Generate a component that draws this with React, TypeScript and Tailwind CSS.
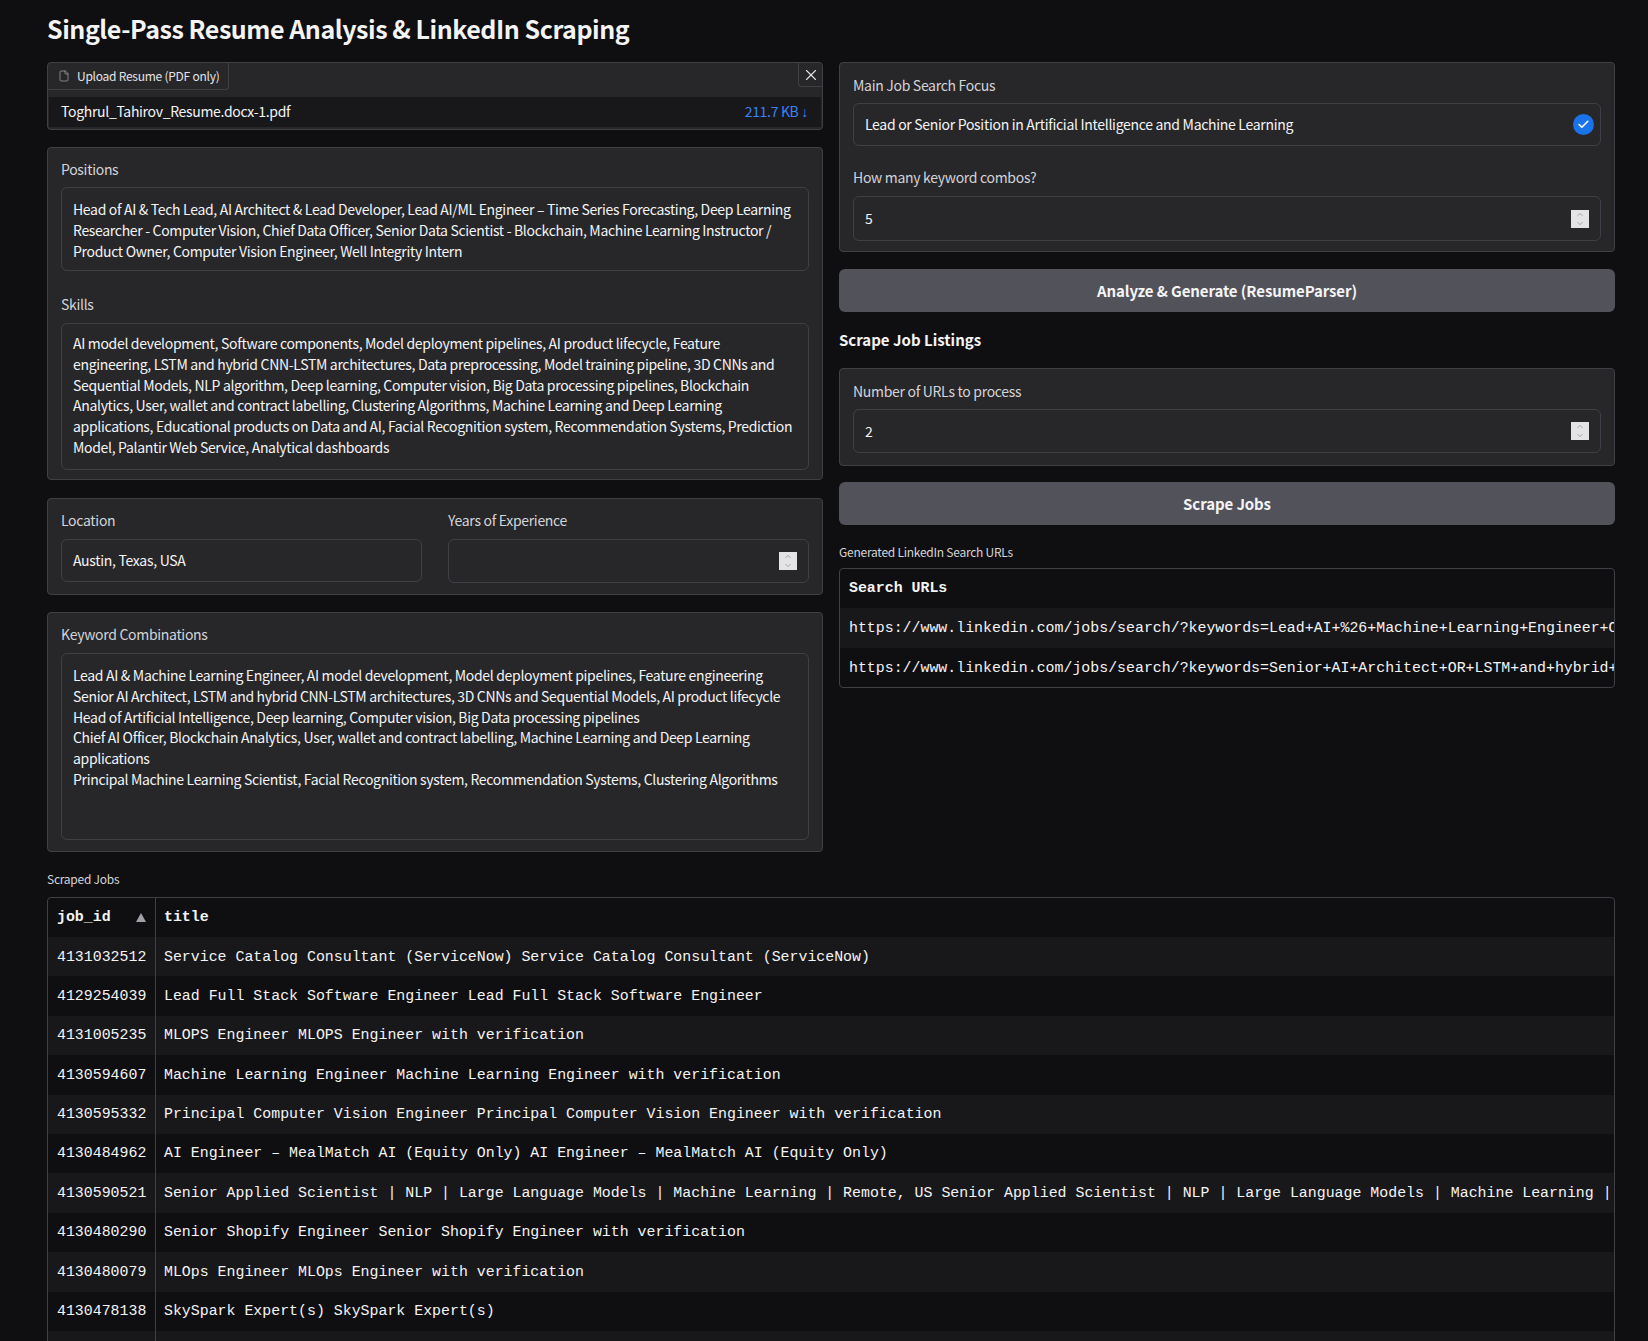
import { File, X, Check, ChevronUp, ChevronDown } from 'lucide-react';

const sans = 'font-["Noto_Sans_CJK_SC","Noto_Sans",sans-serif]';

const jobs = [
  ['4131032512', 'Service Catalog Consultant (ServiceNow) Service Catalog Consultant (ServiceNow)'],
  ['4129254039', 'Lead Full Stack Software Engineer Lead Full Stack Software Engineer'],
  ['4131005235', 'MLOPS Engineer MLOPS Engineer with verification'],
  ['4130594607', 'Machine Learning Engineer Machine Learning Engineer with verification'],
  ['4130595332', 'Principal Computer Vision Engineer Principal Computer Vision Engineer with verification'],
  ['4130484962', 'AI Engineer – MealMatch AI (Equity Only) AI Engineer – MealMatch AI (Equity Only)'],
  ['4130590521', 'Senior Applied Scientist | NLP | Large Language Models | Machine Learning | Remote, US Senior Applied Scientist | NLP | Large Language Models | Machine Learning |'],
  ['4130480290', 'Senior Shopify Engineer Senior Shopify Engineer with verification'],
  ['4130480079', 'MLOps Engineer MLOps Engineer with verification'],
  ['4130478138', 'SkySpark Expert(s) SkySpark Expert(s)'],
  ['', ''],
];

const urls = [
  'https://www.linkedin.com/jobs/search/?keywords=Lead+AI+%26+Machine+Learning+Engineer+OR',
  'https://www.linkedin.com/jobs/search/?keywords=Senior+AI+Architect+OR+LSTM+and+hybrid+CNN',
];

function Panel({ className = '', children }: { className?: string; children: React.ReactNode }) {
  return <div className={`bg-[#27272a] border border-[#3f3f46] rounded-[4px] ${className}`}>{children}</div>;
}

function Label({ children }: { children: React.ReactNode }) {
  return <div className="text-[14px] tracking-[-0.3px] leading-[20px] text-[#d4d4d8]">{children}</div>;
}

function TextBox({ className = '', lines }: { className?: string; lines: string[] }) {
  return (
    <div className={`mt-[8px] border border-[#3f3f46] rounded-[6px] px-[11px] py-[11px] text-[14px] tracking-[-0.32px] leading-[20.8px] whitespace-nowrap text-[#f4f4f5] ${className}`}>
      {lines.map((l) => (
        <div key={l}>{l}</div>
      ))}
    </div>
  );
}

function NumberBox({ value, className = '' }: { value: string; className?: string }) {
  return (
    <div className={`mt-[8px] flex items-center justify-between border border-[#3f3f46] rounded-[6px] pl-[11px] pr-[11px] text-[14px] text-[#f4f4f5] ${className}`}>
      <span>{value}</span>
      <span className="flex flex-col items-center justify-center w-[18px] h-[18px] bg-[#e4e4e7] text-[#71717a]">
        <ChevronUp className="w-[12px] h-[9px]" strokeWidth={1.5} />
        <ChevronDown className="w-[12px] h-[9px]" strokeWidth={1.5} />
      </span>
    </div>
  );
}

function WideButton({ children }: { children: React.ReactNode }) {
  return (
    <button className="w-full h-[43px] pt-[1px] bg-[#52525b] rounded-[6px] text-[15px] tracking-[-0.1px] font-semibold text-[#f4f4f5] text-center">
      {children}
    </button>
  );
}

export default function App() {
  return (
    <div className={`h-[1341px] overflow-hidden bg-[#0f0f11] pl-[47px] pr-[33px] ${sans}`}>
      <h1 className="h-[62px] pt-[10px] text-[25px] tracking-[-0.45px] leading-[36px] font-semibold text-[#f4f4f5]">
        Single-Pass Resume Analysis &amp; LinkedIn Scraping
      </h1>

      <div className="grid grid-cols-2 gap-x-[16px] h-[806px]">
        <div className="flex flex-col">
          <Panel className="relative h-[68px]">
            <div className="flex items-center gap-[7px] w-[181px] h-[27px] pl-[10px] border-r border-b border-[#3f3f46] rounded-br-[4px] text-[12px] tracking-[-0.25px] whitespace-nowrap text-[#e4e4e7]">
              <File className="w-[12px] h-[12px] text-[#a1a1aa]" strokeWidth={1.5} />
              Upload Resume (PDF only)
            </div>
            <div className="absolute top-0 right-0 flex items-center justify-center w-[24px] h-[24px] border-l border-b border-[#3f3f46] rounded-bl-[4px] text-[#e4e4e7]">
              <X className="w-[18px] h-[18px]" strokeWidth={1.5} />
            </div>
            <div className="flex items-center justify-between h-[30px] mx-[1px] mt-[7px] pb-[1px] pl-[12px] pr-[13px] bg-[#18181b] text-[14px] tracking-[-0.32px] text-[#f4f4f5]">
              <span>Toghrul_Tahirov_Resume.docx-1.pdf</span>
              <span className="text-[#3b82f6]">
                211.7 KB <span className="font-['Liberation_Sans',sans-serif] text-[14px]">↓</span>
              </span>
            </div>
          </Panel>

          <Panel className="mt-[17px] h-[333px] px-[13px] pt-[11px]">
            <Label>Positions</Label>
            <TextBox
              className="h-[84px]"
              lines={[
                'Head of AI & Tech Lead, AI Architect & Lead Developer, Lead AI/ML Engineer – Time Series Forecasting, Deep Learning',
                'Researcher - Computer Vision, Chief Data Officer, Senior Data Scientist - Blockchain, Machine Learning Instructor /',
                'Product Owner, Computer Vision Engineer, Well Integrity Intern',
              ]}
            />
            <div className="h-[23px]" />
            <Label>Skills</Label>
            <TextBox
              className="!mt-[9px] !pt-[9px] h-[147px]"
              lines={[
                'AI model development, Software components, Model deployment pipelines, AI product lifecycle, Feature',
                'engineering, LSTM and hybrid CNN-LSTM architectures, Data preprocessing, Model training pipeline, 3D CNNs and',
                'Sequential Models, NLP algorithm, Deep learning, Computer vision, Big Data processing pipelines, Blockchain',
                'Analytics, User, wallet and contract labelling, Clustering Algorithms, Machine Learning and Deep Learning',
                'applications, Educational products on Data and AI, Facial Recognition system, Recommendation Systems, Prediction',
                'Model, Palantir Web Service, Analytical dashboards',
              ]}
            />
          </Panel>

          <Panel className="mt-[18px] h-[97px] px-[13px] pt-[11px] grid grid-cols-2 gap-x-[26px]">
            <div>
              <Label>Location</Label>
              <div className="mt-[9px] flex items-center h-[43px] border border-[#3f3f46] rounded-[6px] px-[11px] text-[14px] tracking-[-0.3px] text-[#f4f4f5]">
                Austin, Texas, USA
              </div>
            </div>
            <div>
              <Label>Years of Experience</Label>
              <NumberBox value="" className="!mt-[9px] h-[44px]" />
            </div>
          </Panel>

          <Panel className="mt-[17px] h-[240px] px-[13px] pt-[11px]">
            <Label>Keyword Combinations</Label>
            <TextBox
              className="!mt-[9px] h-[187px]"
              lines={[
                'Lead AI & Machine Learning Engineer, AI model development, Model deployment pipelines, Feature engineering',
                'Senior AI Architect, LSTM and hybrid CNN-LSTM architectures, 3D CNNs and Sequential Models, AI product lifecycle',
                'Head of Artificial Intelligence, Deep learning, Computer vision, Big Data processing pipelines',
                'Chief AI Officer, Blockchain Analytics, User, wallet and contract labelling, Machine Learning and Deep Learning',
                'applications',
                'Principal Machine Learning Scientist, Facial Recognition system, Recommendation Systems, Clustering Algorithms',
              ]}
            />
          </Panel>
        </div>

        <div className="flex flex-col">
          <Panel className="h-[190px] px-[13px] pt-[12px]">
            <Label>Main Job Search Focus</Label>
            <div className="mt-[8px] flex items-center justify-between h-[43px] border border-[#3f3f46] rounded-[6px] pl-[11px] pr-[6px] text-[14px] tracking-[-0.3px] text-[#f4f4f5]">
              <span>Lead or Senior Position in Artificial Intelligence and Machine Learning</span>
              <span className="flex items-center justify-center w-[21px] h-[21px] rounded-full bg-[#1a73e8] text-white">
                <Check className="w-[13px] h-[13px]" strokeWidth={3} />
              </span>
            </div>
            <div className="h-[21px]" />
            <Label>How many keyword combos?</Label>
            <NumberBox value="5" className="!mt-[9px] h-[45px]" />
          </Panel>

          <div className="mt-[17px]">
            <WideButton>Analyze &amp; Generate (ResumeParser)</WideButton>
          </div>

          <h2 className="mt-[16px] text-[15px] leading-[24px] font-semibold text-[#f4f4f5]">Scrape Job Listings</h2>

          <Panel className="mt-[16px] h-[98px] px-[13px] pt-[12px]">
            <Label>Number of URLs to process</Label>
            <NumberBox value="2" className="h-[44px]" />
          </Panel>

          <div className="mt-[16px]">
            <WideButton>Scrape Jobs</WideButton>
          </div>

          <div className="mt-[18px] text-[12px] tracking-[-0.25px] leading-[18px] text-[#d4d4d8]">Generated LinkedIn Search URLs</div>

          <div className="mt-[7px] h-[120px] overflow-hidden border border-[#3f3f46] rounded-[4px] font-['Liberation_Mono',monospace] text-[14.9px] text-[#f4f4f5] whitespace-nowrap">
            <div className="flex items-center h-[39px] px-[9px] font-bold">Search URLs</div>
            {urls.map((u, i) => (
              <div key={u} className={`flex items-center h-[40px] px-[9px] ${i === 0 ? 'bg-[#18181b]' : ''}`}>
                {u}
              </div>
            ))}
          </div>
        </div>
      </div>

      <div className="h-[2px]" />
      <div className="text-[12px] tracking-[-0.25px] leading-[18px] text-[#d4d4d8]">Scraped Jobs</div>

      <div className="mt-[9px] border border-[#3f3f46] rounded-t-[4px] overflow-hidden font-['Liberation_Mono',monospace] text-[14.9px] text-[#f4f4f5] whitespace-nowrap">
        <div className="flex h-[39px] font-bold">
          <div className="relative flex items-center w-[108px] shrink-0 pl-[9px] border-r border-[#3f3f46]">
            job_id
            <span className="absolute right-[9px] top-[15px] w-0 h-0 border-x-[5px] border-x-transparent border-b-[9px] border-b-[#a1a1aa]" />
          </div>
          <div className="flex items-center pl-[8px]">title</div>
        </div>
        {jobs.map(([id, title], i) => (
          <div key={i} className={`flex h-[39.4px] ${i % 2 === 0 ? 'bg-[#18181b]' : ''}`}>
            <div className="flex items-center w-[108px] shrink-0 pl-[9px] border-r border-[#3f3f46]">{id}</div>
            <div className="flex items-center pl-[8px] min-w-0 overflow-hidden">{title}</div>
          </div>
        ))}
      </div>
    </div>
  );
}
